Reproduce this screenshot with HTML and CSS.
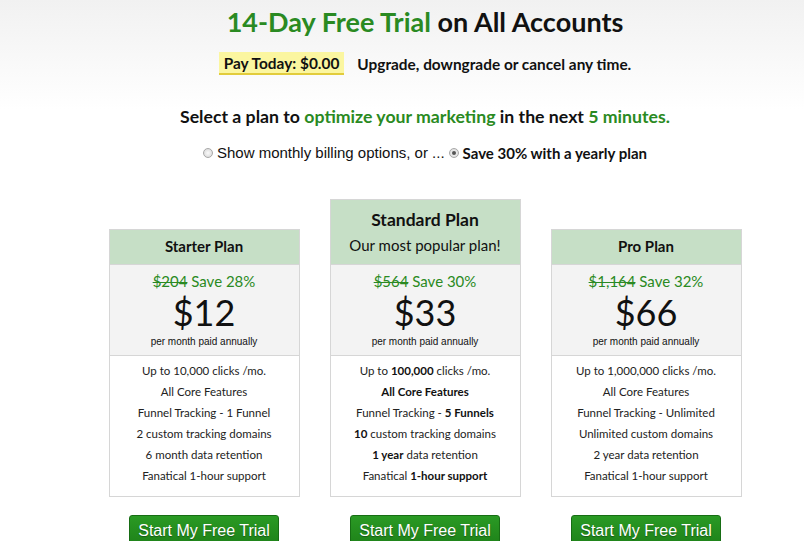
FILE: index.html
```html
<!DOCTYPE html>
<html lang="en">
<head>
    <meta charset="UTF-8">
    <title>Pricing - 14-Day Free Trial</title>
    <link rel="stylesheet" href="styles.css">
</head>
<body>
    <div class="page">
        <h1 class="title"><span class="green">14-Day Free Trial</span> on All Accounts</h1>

        <div class="pay-row">
            <span class="pay-today">Pay Today: $0.00</span>
            <span class="pay-note">Upgrade, downgrade or cancel any time.</span>
        </div>

        <h2 class="select">Select a plan to <span class="green">optimize your marketing</span> in the next <span class="green">5 minutes.</span></h2>

        <div class="billing">
            <span class="radio"></span>
            <span class="billing-monthly">Show monthly billing options, or ...</span>
            <span class="radio checked"></span>
            <span class="billing-yearly">Save 30% with a yearly plan</span>
        </div>

        <div class="plans">
            <div class="plan">
                <div class="plan-card">
                    <div class="plan-head">
                        <div class="plan-name">Starter Plan</div>
                    </div>
                    <div class="plan-price">
                        <div class="was"><s>$204</s> Save 28%</div>
                        <div class="amount">$12</div>
                        <div class="per">per month paid annually</div>
                    </div>
                    <ul class="features">
                        <li>Up to 10,000 clicks /mo.</li>
                        <li>All Core Features</li>
                        <li>Funnel Tracking - 1 Funnel</li>
                        <li>2 custom tracking domains</li>
                        <li>6 month data retention</li>
                        <li>Fanatical 1-hour support</li>
                    </ul>
                </div>
                <button class="trial-btn">Start My Free Trial</button>
            </div>

            <div class="plan">
                <div class="plan-card">
                    <div class="plan-head popular">
                        <div class="plan-name">Standard Plan</div>
                        <div class="plan-tag">Our most popular plan!</div>
                    </div>
                    <div class="plan-price">
                        <div class="was"><s>$564</s> Save 30%</div>
                        <div class="amount">$33</div>
                        <div class="per">per month paid annually</div>
                    </div>
                    <ul class="features">
                        <li>Up to <b>100,000</b> clicks /mo.</li>
                        <li><b>All Core Features</b></li>
                        <li>Funnel Tracking - <b>5 Funnels</b></li>
                        <li><b>10</b> custom tracking domains</li>
                        <li><b>1 year</b> data retention</li>
                        <li>Fanatical <b>1-hour support</b></li>
                    </ul>
                </div>
                <button class="trial-btn">Start My Free Trial</button>
            </div>

            <div class="plan">
                <div class="plan-card">
                    <div class="plan-head">
                        <div class="plan-name">Pro Plan</div>
                    </div>
                    <div class="plan-price">
                        <div class="was"><s>$1,164</s> Save 32%</div>
                        <div class="amount">$66</div>
                        <div class="per">per month paid annually</div>
                    </div>
                    <ul class="features">
                        <li>Up to 1,000,000 clicks /mo.</li>
                        <li>All Core Features</li>
                        <li>Funnel Tracking - Unlimited</li>
                        <li>Unlimited custom domains</li>
                        <li>2 year data retention</li>
                        <li>Fanatical 1-hour support</li>
                    </ul>
                </div>
                <button class="trial-btn">Start My Free Trial</button>
            </div>
        </div>
    </div>
</body>
</html>
```

FILE: styles.css
```css
html {
    overflow: hidden;
}
body {
    margin: 0;
    font-family: Lato, "Liberation Sans", sans-serif;
    color: #111;
    background: linear-gradient(#f1f1f1, #fff 110px) no-repeat;
}
.page {
    padding-left: 46px;
    text-align: center;
}
.green {
    color: #2a8a22;
}
.title {
    margin: 0;
    padding-top: 5px;
    font-size: 27px;
    font-weight: 700;
    line-height: 34px;
}
.pay-row {
    display: flex;
    justify-content: center;
    align-items: center;
    gap: 13px;
    margin-top: 13px;
    font-size: 15px;
    font-weight: 700;
}
.pay-today {
    background-color: #fbf6a0;
    border-bottom: 2px solid #e2cc3c;
    padding: 2px 5px 1px;
    font-size: 15.4px;
    line-height: 18px;
}
.pay-note {
    font-size: 15.4px;
}
.select {
    margin: 30px 0 0;
    font-size: 17.7px;
    font-weight: 700;
    line-height: 24px;
}
.billing {
    display: flex;
    justify-content: center;
    align-items: center;
    margin-top: 14px;
    font-size: 15px;
    line-height: 20px;
}
.billing-monthly {
    font-family: "Liberation Sans", sans-serif;
    margin-right: 4px;
}
.billing-yearly {
    font-weight: 700;
}
.radio {
    width: 8px;
    height: 8px;
    border-radius: 50%;
    border: 1px solid #a8a8a8;
    background: radial-gradient(#fafafa, #d4d4d4);
    margin-right: 4px;
    position: relative;
}
.radio.checked::after {
    content: "";
    position: absolute;
    left: 2px;
    top: 2px;
    width: 4px;
    height: 4px;
    border-radius: 50%;
    background-color: #555;
}
.plans {
    display: flex;
    justify-content: center;
    align-items: flex-end;
    gap: 30px;
    margin-top: 36px;
}
.plan {
    display: flex;
    flex-direction: column;
    align-items: center;
}
.plan-card {
    width: 189px;
    border: 1px solid #d6d6d6;
}
.plan-head {
    background-color: #c6dfc6;
    padding: 8px 0 9px;
}
.plan-head.popular {
    padding: 9px 0 9px;
}
.plan-name {
    font-size: 15px;
    font-weight: 700;
    line-height: 17px;
}
.popular .plan-name {
    font-size: 17.5px;
    line-height: 21px;
}
.plan-tag {
    margin-top: 5px;
    font-size: 15px;
    line-height: 20px;
}
.plan-price {
    background-color: #f3f3f3;
    border-top: 1px solid #d6d6d6;
    border-bottom: 1px solid #d6d6d6;
    padding: 7px 0 6px;
}
.was {
    color: #2a8a22;
    font-size: 15px;
    line-height: 18px;
}
.was s {
    text-decoration-thickness: 1px;
}
.amount {
    font-size: 36px;
    line-height: 40px;
    margin-top: 2px;
}
.per {
    font-family: "Liberation Sans", sans-serif;
    font-size: 10px;
    line-height: 14px;
    margin-top: 3px;
}
.features {
    list-style: none;
    margin: 0;
    padding: 4px 0 10px;
    font-size: 11.5px;
    line-height: 21px;
    color: #222;
}
.features b {
    color: #111;
}
.trial-btn {
    margin-top: 18px;
    width: 150px;
    height: 34px;
    padding: 0 0 2px;
    font-family: "Liberation Sans", sans-serif;
    font-size: 16px;
    color: #fff;
    text-shadow: 0 1px 1px rgba(0, 0, 0, 0.35);
    background: linear-gradient(#2a9a24, #1d7f18);
    border: 1px solid #176d14;
    border-radius: 3px;
    cursor: pointer;
}
```
